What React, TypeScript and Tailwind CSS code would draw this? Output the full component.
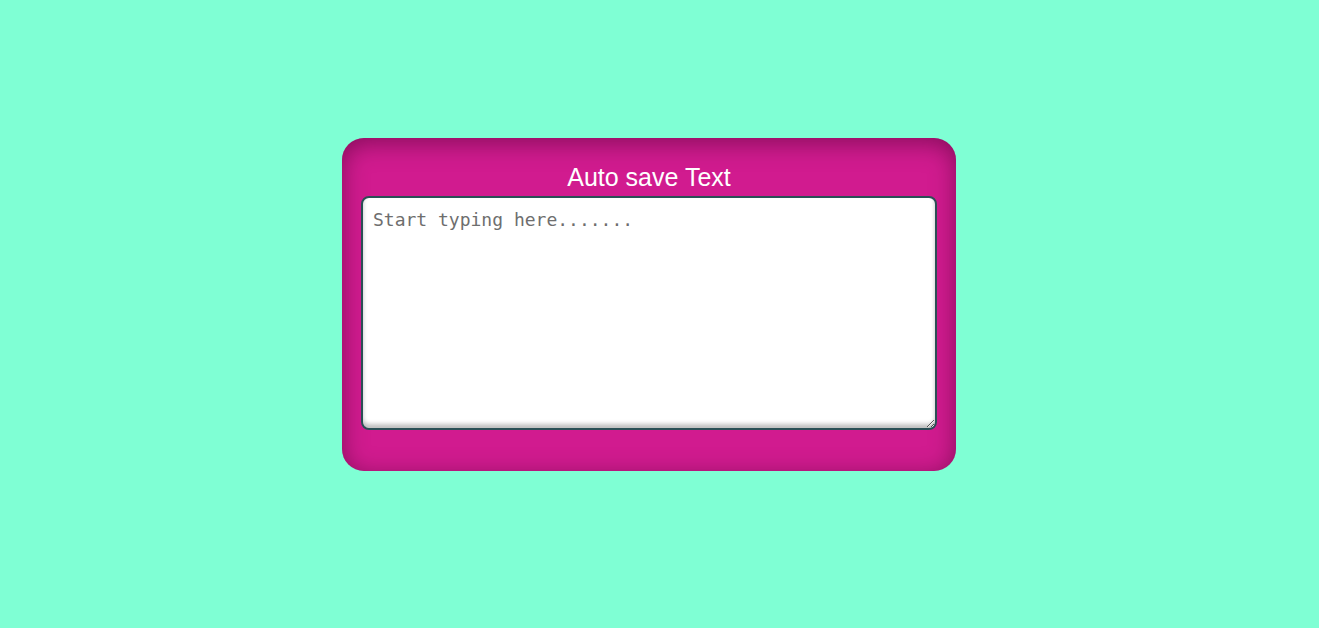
import React, { useState } from 'react';

export default function App() {
  const [text, setText] = useState('');

  return (
    <div className="min-h-screen w-full bg-[#7fffd4] flex items-center justify-center pr-[21px] pb-[20px]">
      <div className="w-[614px] h-[333px] rounded-[22px] bg-[#d11b8f] shadow-[inset_0_5px_24px_rgba(60,0,40,0.5)] px-[19px] pt-[25px] flex flex-col items-center">
        <h2 className="text-[25px] leading-[29px] text-white font-['Liberation_Sans',Arial,sans-serif]">
          Auto save Text
        </h2>
        <textarea
          autoFocus
          value={text}
          onChange={(e) => setText(e.target.value)}
          placeholder="Start typing here......."
          className="mt-[4px] w-[576px] h-[234px] rounded-[8px] border-2 border-[#2a4f55] bg-white px-[10px] pt-[9px] pb-[7px] text-[18px] leading-[26px] text-black placeholder:text-[#6e6e6e] outline-none shadow-[inset_0_-4px_4px_rgba(0,0,0,0.25)] font-['DejaVu_Sans_Mono',monospace]"
        />
      </div>
    </div>
  );
}
